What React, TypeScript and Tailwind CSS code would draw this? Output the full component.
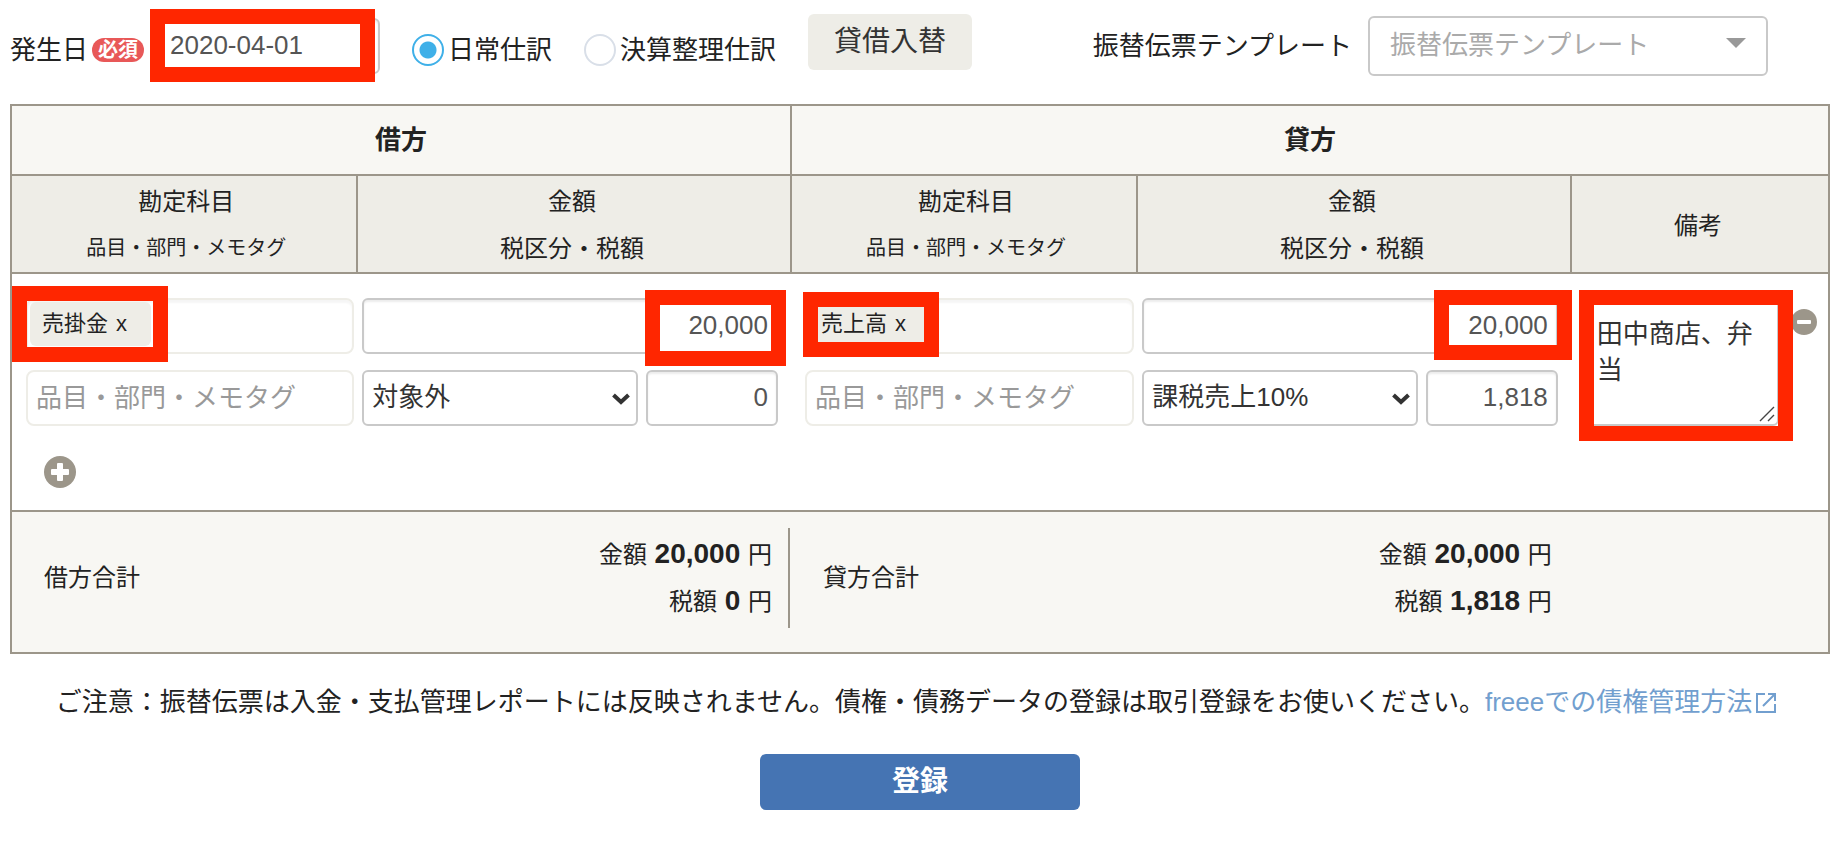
import { useState } from 'react'
import clsx from 'clsx'

interface EntrySide {
  id: string
  label: string
  account: string
  amount: string
  taxType: string
  tax: string
  accountMark: string
  amountMark: string
}

const sides: EntrySide[] = [
  {
    id: 'debit',
    label: '借方',
    account: '売掛金',
    amount: '20,000',
    taxType: '対象外',
    tax: '0',
    accountMark: '-top-3.5 -left-4 h-[76px] w-[156px]',
    amountMark: '-top-2 -right-2 h-[76px] w-[141px]'
  },
  {
    id: 'credit',
    label: '貸方',
    account: '売上高',
    amount: '20,000',
    taxType: '課税売上10%',
    tax: '1,818',
    accountMark: '-top-2 -left-1 h-[65px] w-[136px]',
    amountMark: '-top-2 -right-3.5 h-[70px] w-[138px]'
  }
]

const taxTypes = ['対象外', '課税売上10%']

const fieldClass =
  'h-14 w-full rounded-md border-2 border-[#c9c9c9] bg-white px-2 pb-0.5 text-[26px] text-[#555] shadow-[inset_0_2px_2px_rgba(0,0,0,0.075)] outline-none'
const tagFieldClass =
  'h-14 w-full rounded-lg border-2 border-[#eeede7] bg-white text-[26px] outline-none'

function Highlight({ className }: { className: string }) {
  return (
    <span
      aria-hidden="true"
      className={clsx('pointer-events-none absolute z-10 border-[15px] border-[#ff2600]', className)}
    />
  )
}

function KindRadio({ label, checked, onChange }: { label: string; checked: boolean; onChange: () => void }) {
  return (
    <label className="flex h-16 items-center gap-1">
      <input
        type="radio"
        name="kind"
        checked={checked}
        onChange={onChange}
        className="h-8 w-8 appearance-none rounded-full border-2 border-[#d9dfe8] bg-white checked:border-[#3fb0e8] checked:bg-[radial-gradient(circle,#3fb0e8_8px,white_9px)]"
      />
      {label}
    </label>
  )
}

function EntryCells({ side }: { side: EntrySide }) {
  return (
    <>
      <td className="pt-6 pr-[3px] pl-3.5 align-top">
        <div className="flex flex-col gap-4">
          <div className={clsx(tagFieldClass, 'relative flex items-start p-0.5 shadow-[inset_0_3px_2px_rgba(0,0,0,0.04)]')}>
            <span className="flex h-11 shrink-0 items-center gap-2 rounded-md bg-[#eeede7] pr-6 pl-3 text-[22px] text-[#222]">
              {side.account}
              <button type="button" aria-label={`${side.account}を外す`} className="leading-none">
                x
              </button>
            </span>
            <input aria-label={`${side.label} 勘定科目`} className="h-11 min-w-0 flex-1 outline-none" />
            <Highlight className={side.accountMark} />
          </div>
          <input
            aria-label={`${side.label} 品目・部門・メモタグ`}
            placeholder="品目・部門・メモタグ"
            className={clsx(tagFieldClass, 'px-2 placeholder:text-[#999]')}
          />
        </div>
      </td>
      <td className="pt-6 pr-[13px] pl-[5px] align-top">
        <div className="flex flex-col gap-4">
          <div className="relative">
            <input aria-label={`${side.label} 金額`} defaultValue={side.amount} className={clsx(fieldClass, 'text-right')} />
            <Highlight className={side.amountMark} />
          </div>
          <div className="flex gap-2">
            <div className="relative flex-1">
              <select
                aria-label={`${side.label} 税区分`}
                defaultValue={side.taxType}
                className="h-14 w-full appearance-none rounded-md border-2 border-[#c9c9c9] bg-white px-2 pb-0.5 text-[26px] text-[#333] outline-none"
              >
                {taxTypes.map((type) => (
                  <option key={type}>{type}</option>
                ))}
              </select>
              <svg viewBox="0 0 18 12" className="pointer-events-none absolute top-[23px] right-2 h-3 w-[18px]" fill="none" stroke="#333" strokeWidth="4">
                <path d="M1.5 2 9 9l7.5-7" />
              </svg>
            </div>
            <input
              aria-label={`${side.label} 税額`}
              defaultValue={side.tax}
              className={clsx(fieldClass, 'max-w-[132px] text-right')}
            />
          </div>
        </div>
      </td>
    </>
  )
}

function TotalCell({ side, divider }: { side: EntrySide; divider: boolean }) {
  return (
    <td colSpan={2} className="pt-4 pr-px pb-6 pl-8">
      <div
        className={clsx(
          'flex h-[100px] items-center justify-between border-r-2 pr-4 text-2xl',
          divider ? 'border-[#9c968a]' : 'border-transparent'
        )}
      >
        <span>{side.label}合計</span>
        <div className="text-right leading-[46px]">
          <p>
            金額 <b className="mx-px text-[28px]">{side.amount}</b> 円
          </p>
          <p>
            税額 <b className="mx-px text-[28px]">{side.tax}</b> 円
          </p>
        </div>
      </div>
    </td>
  )
}

export default function App() {
  const [kind, setKind] = useState('daily')

  return (
    <form
      lang="ja"
      onSubmit={(e) => e.preventDefault()}
      className="bg-white pr-3.5 pl-2.5 font-['Liberation_Sans','Noto_Sans_CJK_JP',sans-serif] text-[26px] leading-9 text-[#222]"
    >
      {/* Date, kind and template */}
      <div className="flex h-[104px] items-start justify-between pt-3.5 whitespace-nowrap">
        <div className="flex items-start">
          <div className="flex items-start pt-1">
            <label htmlFor="date" className="flex h-16 items-center">
              発生日
              <span className="ml-1 flex h-6 items-center rounded-full bg-[#e85858] px-1.5 text-xl font-bold text-white">
                必須
              </span>
            </label>
            <div className="relative ml-3 w-[224px]">
              <input id="date" defaultValue="2020-04-01" className={clsx(fieldClass, 'px-3')} />
              <Highlight className="-top-[9px] -left-1.5 h-[73px] w-[225px]" />
            </div>
            <div className="ml-8 flex gap-8">
              <KindRadio label="日常仕訳" checked={kind === 'daily'} onChange={() => setKind('daily')} />
              <KindRadio label="決算整理仕訳" checked={kind === 'closing'} onChange={() => setKind('closing')} />
            </div>
          </div>
          <button type="button" className="ml-8 h-14 rounded-md bg-[#eeede7] px-[26px] text-[28px] text-[#333]">
            貸借入替
          </button>
        </div>
        <div className="mr-[62px] flex items-center gap-4 pt-0.5">
          <label htmlFor="template">振替伝票テンプレート</label>
          <div className="relative w-[400px]">
            <select
              id="template"
              className="h-[60px] w-full appearance-none rounded-md border-2 border-[#c9c9c9] bg-white px-5 pb-0.5 text-[26px] text-[#aaa] outline-none"
            >
              <option>振替伝票テンプレート</option>
            </select>
            <svg viewBox="0 0 20 10" className="pointer-events-none absolute top-[22px] right-[22px] h-2.5 w-5" fill="#999">
              <path d="M0 0h20L10 10z" />
            </svg>
          </div>
        </div>
      </div>

      <table className="w-full table-fixed border-collapse border-2 border-[#9c968a]">
        <colgroup>
          <col className="w-[19.05%]" />
          <col className="w-[23.85%]" />
          <col className="w-[19.05%]" />
          <col className="w-[23.85%]" />
          <col />
        </colgroup>
        <thead>
          <tr className="h-[70px] bg-[#f8f7f3]">
            <th colSpan={2} className="border-2 border-[#9c968a]">
              借方
            </th>
            <th colSpan={3} className="border-2 border-[#9c968a]">
              貸方
            </th>
          </tr>
          <tr className="h-[98px] bg-[#eeede7] text-2xl leading-[47px]">
            {sides.map((side) => [
              <th key={`${side.id}-account`} className="border-2 border-[#9c968a] pt-0.5 pl-1 font-normal">
                勘定科目
                <div className="text-xl leading-[47px]">品目・部門・メモタグ</div>
              </th>,
              <th key={`${side.id}-amount`} className="border-2 border-[#9c968a] pt-0.5 pr-1 font-normal">
                金額
                <div>税区分・税額</div>
              </th>
            ])}
            <th className="border-2 border-[#9c968a] pt-0.5 pr-1 font-normal">備考</th>
          </tr>
        </thead>
        <tbody>
          <tr>
            {sides.map((side) => (
              <EntryCells key={side.id} side={side} />
            ))}
            <td className="pt-6 pl-4 align-top">
              <div className="flex items-start gap-3">
                <div className="relative h-32 w-[192px]">
                  <textarea
                    aria-label="備考"
                    defaultValue="田中商店、弁当"
                    className="h-full w-full resize-none rounded-md border-2 border-[#c9c9c9] bg-white px-2 py-4 text-[26px] leading-9 text-[#333] outline-none"
                  />
                  <svg viewBox="0 0 16 16" className="pointer-events-none absolute right-1 bottom-1 h-4 w-4" fill="none" stroke="#444" strokeWidth="1.4">
                    <path d="M1 15 15 1M9 15l6-6" />
                  </svg>
                  <Highlight className="-top-2 -left-2 h-[151px] w-[214px]" />
                </div>
                <button type="button" aria-label="行を削除" className="mt-[11px] h-[26px] w-[26px]">
                  <svg viewBox="0 0 26 26" className="h-full w-full">
                    <circle cx="13" cy="13" r="13" fill="#9c968a" />
                    <rect x="6" y="11" width="14" height="4" rx="1" fill="#fff" />
                  </svg>
                </button>
              </div>
            </td>
          </tr>
          <tr>
            <td colSpan={5} className="pt-[30px] pb-[22px] pl-8">
              <button type="button" aria-label="行を追加" className="block h-8 w-8">
                <svg viewBox="0 0 32 32" className="h-full w-full">
                  <circle cx="16" cy="16" r="16" fill="#9c968a" />
                  <path
                    d="M14 7h4a1 1 0 0 1 1 1v5h5a1 1 0 0 1 1 1v4a1 1 0 0 1-1 1h-5v5a1 1 0 0 1-1 1h-4a1 1 0 0 1-1-1v-5H8a1 1 0 0 1-1-1v-4a1 1 0 0 1 1-1h5V8a1 1 0 0 1 1-1z"
                    fill="#fff"
                  />
                </svg>
              </button>
            </td>
          </tr>
        </tbody>
        <tfoot>
          <tr className="border-t-2 border-[#9c968a] bg-[#f8f7f3]">
            {sides.map((side) => (
              <TotalCell key={side.id} side={side} divider={side.id === 'debit'} />
            ))}
            <td />
          </tr>
        </tfoot>
      </table>

      <p className="mt-[30px] pr-2 text-center whitespace-nowrap">
        ご注意：振替伝票は入金・支払管理レポートには反映されません。債権・債務データの登録は取引登録をお使いください。
        <a href="#receivables" className="text-[#729fcf]">
          freeeでの債権管理方法
          <svg viewBox="0 0 20 20" className="ml-1 inline h-5 w-5 align-[-2px]" fill="none" stroke="currentColor" strokeWidth="2">
            <path d="M9 1H1v18h18v-8M12 1h7v7M19 1 7 13" />
          </svg>
        </a>
      </p>

      <button type="submit" className="mx-auto mt-[34px] block h-14 w-80 rounded-md bg-[#4574b3] text-[28px] font-bold text-white">
        登録
      </button>
    </form>
  )
}
